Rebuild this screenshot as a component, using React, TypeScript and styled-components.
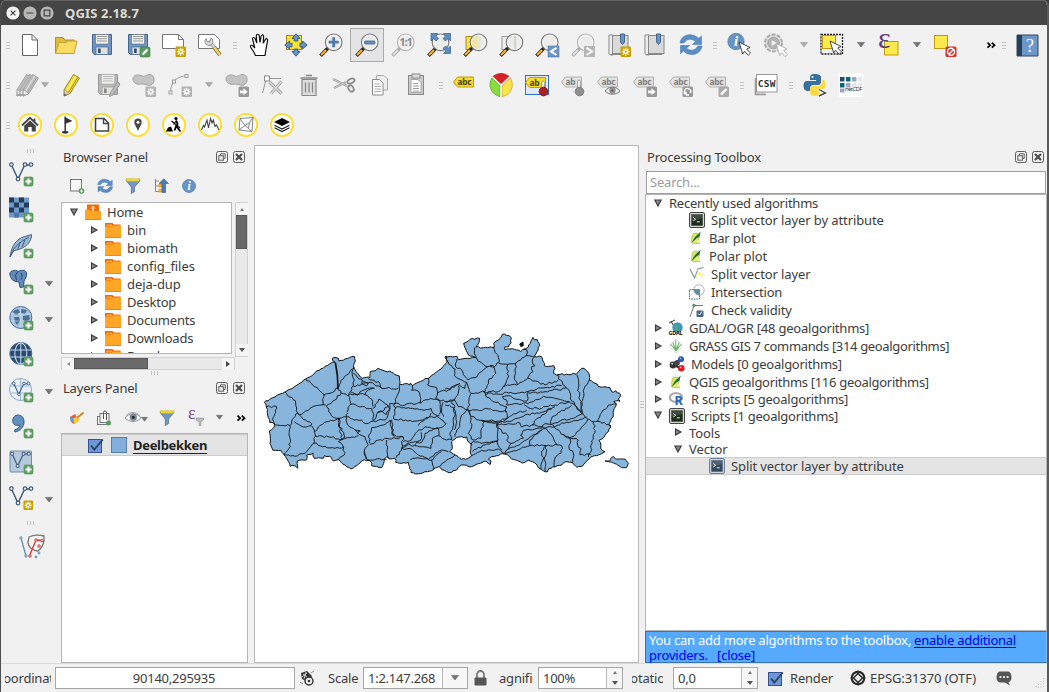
import React from "react";
import styled, { createGlobalStyle } from "styled-components";

const Global = createGlobalStyle`
  * { box-sizing: border-box; }
  body { margin: 0; background: #3a3a3a; }
  text { font-family: "Noto Sans", sans-serif; }
`;

/* ---------- window ---------- */
const Window = styled.div`
  width: 1049px; height: 692px; overflow: hidden;
  display: flex; flex-direction: column;
  background: #f1f1f1; color: #3c3c3c;
  border-left: 1px solid #4d4d4d; border-right: 2px solid #5a5a5a;
  border-radius: 6px 6px 0 0;
  font: 13px/18px "Noto Sans", sans-serif; letter-spacing: -0.2px;
  white-space: nowrap;
`;
const TitleBar = styled.header`
  height: 25px; flex: none; display: flex; align-items: center; gap: 3px; padding-left: 5px;
  background: #454545; border-top: 1px solid #626262;
  color: #dfdbd2; font-weight: 700; letter-spacing: 0;
`;
const TitleText = styled.span`margin-left: 8px; font-size: 13px; letter-spacing: 0.15px;`;
const Toolbar = styled.div`height: 40px; flex: none; display: flex; align-items: center; padding-left: 2px;`;
const Cell = styled.div<{ $w?: number; $pressed?: boolean }>`
  width: ${p => p.$w ?? 36}px; height: 34px; flex: none;
  display: flex; align-items: center; justify-content: center;
  ${p => p.$pressed && "margin: 0 1px; width: 34px; background: #e4e4e6; border: 1px solid #a9a9a9;"}
`;
const Grip = styled.div<{ $w?: number }>`
  width: ${p => p.$w ?? 9}px; flex: none; display: flex; justify-content: center;
  &::before { content: ""; width: 4px; height: 7px;
    background: repeating-linear-gradient(#c2c2c2 0 1px, transparent 1px 3px); }
`;
const VGrip = styled.div<{ $h: number; $ml?: number }>`
  height: ${p => p.$h}px; margin-left: ${p => p.$ml ?? 0}px; flex: none; display: flex; align-items: center;
  &::before { content: ""; width: 7px; height: 4px;
    background: repeating-linear-gradient(90deg, #c2c2c2 0 1px, transparent 1px 3px); }
`;
const Svg = styled.svg`display: block; flex: none; overflow: visible;`;

/* ---------- layout ---------- */
const Main = styled.main`flex: none; height: 518px; display: flex;`;
const Side = styled.aside`width: 60px; flex: none; display: flex; flex-direction: column;`;
const SideRow = styled.div`height: 36px; flex: none; padding-left: 8px; display: flex; align-items: center; gap: 12px;`;
const SideDown = styled.div`padding-top: 4px;`;
const Docks = styled.section`width: 187px; flex: none; display: flex; flex-direction: column; margin-right: 6px;`;
const DockTitle = styled.div<{ $h: number }>`
  height: ${p => p.$h}px; flex: none; display: flex; align-items: center; gap: 5px; padding: 0 3px 2px 2px;
  span { flex: 1; }
`;
const DockTools = styled.div<{ $h: number; $gap: number }>`
  height: ${p => p.$h}px; flex: none; display: flex; align-items: center; gap: ${p => p.$gap}px; padding-left: 8px;
`;
const BrowserArea = styled.div`display: grid; grid-template-columns: 171px 3px 13px; height: 155px; flex: none;`;
const Tree = styled.div`background: #fff; border: 1px solid #b5b5b5; overflow: hidden;`;
const BrowserTree = styled(Tree)`height: 152px;`;
const LayerTree = styled(Tree)`flex: 1;`;
const ToolTree = styled(Tree)`height: 437px; flex: none;`;
const TreeRow = styled.div<{ $indent: number; $h?: number; $selected?: boolean }>`
  height: ${p => p.$h ?? 18}px; padding-left: ${p => p.$indent}px;
  display: flex; align-items: center;
  ${p => p.$selected && "background: #e4e4e4; border-top: 1px solid #cbcbcb; border-bottom: 1px solid #cbcbcb;"}
`;
const ArrowBox = styled.div`width: 8px; height: 9px; flex: none;`;
const Label = styled.span<{ $ml?: number; $ls?: number }>`
  margin-left: ${p => p.$ml ?? 5}px; letter-spacing: ${p => p.$ls ?? -0.2}px;
`;
const VScroll = styled.div`
  grid-column: 3; border: 1px solid #d2d2d2; background: #e9e9e9; display: flex; flex-direction: column;
`;
const HScroll = styled.div`
  width: 174px; height: 13px; flex: none; border: 1px solid #d2d2d2; background: #e9e9e9; display: flex;
`;
const ScrollButton = styled.div`
  width: 12px; height: 12px; flex: none; display: flex; align-items: center; justify-content: center; background: #f5f5f5;
`;
const Thumb = styled.div<{ $w?: number; $h?: number }>`
  background: #6a6a6a; border: 1px solid #585858;
  width: ${p => (p.$w ? p.$w + "px" : "100%")}; height: ${p => (p.$h ? p.$h + "px" : "100%")};
`;
const Spacer = styled.div`flex: 1;`;
const Swatch = styled.div`width: 16px; height: 16px; margin-left: 7px; background: #82aedd; border: 1px solid #557da8;`;
const LayerName = styled.span`
  margin-left: 6px; font-weight: 700; color: #222; border-bottom: 1px solid #222; line-height: 16px; letter-spacing: -0.32px;
`;
const Canvas = styled.section`width: 385px; flex: none; background: #fff; border: 1px solid #b9b9b9;`;
const Splitter = styled.div`width: 6px; flex: none; display: flex; align-items: center; justify-content: center;`;
const Toolbox = styled.section`width: 402px; flex: none; display: flex; flex-direction: column;`;
const Search = styled.div`
  height: 23px; margin: 0 1px; border: 1px solid #9f9f9f; background: #fff; color: #9a9a9a; padding: 0 3px; line-height: 20px;
`;
const Notice = styled.div`
  height: 32px; flex: none; background: #55aaff; border: 1px solid #3a74ae; border-right-color: #7dbdff; color: #fff;
  padding: 1px 3px; line-height: 15px; letter-spacing: -0.24px;
`;
const NoticeLine = styled.div`height: 15px; white-space: pre;`;
const NoticeLink = styled.a<{ $line?: boolean }>`
  color: #0000f5; ${p => p.$line && "text-decoration: underline; text-underline-offset: 2px;"}
`;

/* ---------- status bar ---------- */
const Status = styled.footer`
  height: 29px; border-top: 1px solid #dadada; display: flex; align-items: center; padding-left: 4px;
`;
const Clip = styled.div<{ $w: number; $ml?: number }>`
  width: ${p => p.$w}px; margin-left: ${p => p.$ml ?? 0}px; flex: none; overflow: hidden; display: flex; justify-content: center;
`;
const Field = styled.div<{ $w: number; $ml: number; $center?: boolean }>`
  width: ${p => p.$w}px; height: 22px; margin-left: ${p => p.$ml}px; flex: none;
  background: #fff; border: 1px solid #a6a6a6; line-height: 20px; display: flex; letter-spacing: -0.25px;
  > span { flex: 1; padding-left: ${p => (p.$center ? 0 : 4)}px; padding-right: ${p => (p.$center ? 2 : 0)}px; text-align: ${p => (p.$center ? "center" : "left")}; }
`;
const FieldButton = styled.div<{ $w: number }>`
  width: ${p => p.$w}px; background: #f7f7f7; border-left: 1px solid #b8b8b8;
  display: flex; flex-direction: column; align-items: center; justify-content: center; gap: 7px;
`;
const Item = styled.div<{ $ml: number; $w?: number; $ls?: number }>`
  margin-left: ${p => p.$ml}px; flex: none; ${p => p.$w && `width: ${p.$w}px;`}
  letter-spacing: ${p => p.$ls ?? -0.2}px;
`;

/* ---------- small drawings ---------- */
type Kids = { children?: React.ReactNode; s?: number };
const Ic = ({ children, s = 24 }: Kids) => (
  <Svg width={s} height={s} viewBox={`0 0 ${s} ${s}`} fill="none">{children}</Svg>
);
const SerifText = styled.text`&& { font-family: "Liberation Serif", serif; }`;
const MonoText = styled.text`&& { font-family: "DejaVu Sans Mono", monospace; }`;
const Down = ({ w = 8, c = "#757575" }: { w?: number; c?: string }) => (
  <Svg width={w} height={w * 0.65} viewBox="0 0 8 5.2"><path d="M.4.4H7.6L4 5z" fill={c} stroke={c === "#aaa" ? "#999" : "#555"} strokeWidth=".5" /></Svg>
);
const UpTri = () => <Svg width="4" height="3"><path d="M0 3H4L2 0z" fill="#777" /></Svg>;
const DownTri = () => <Svg width="6" height="4"><path d="M0 0H6L3 4z" fill="#555" /></Svg>;
const Arrow = ({ open }: { open?: boolean }) => (
  <ArrowBox><Svg width="8" height="8"><path d={open ? "M.8 1H7.2L4 7z" : "M1.5 1V7L7 4z"} fill="#888" stroke="#3a3a3a" strokeWidth="1.1" /></Svg></ArrowBox>
);
const Chevrons = () => <Ic s={10}><path d="M1.5 2.7 4.2 5.2 1.5 7.7M5.8 2.7 8.5 5.2 5.8 7.7" stroke="#000" strokeWidth="1.7" /></Ic>;
const Plus = () => (
  <g><rect x="15" y="15" width="9" height="9" rx="1.5" fill="#5f9f60" stroke="#4a8a4c" strokeWidth=".6" />
    <path d="M19.5 16.5V22.5M16.5 19.5H22.5" stroke="#fff" strokeWidth="2" /></g>
);
const Star = ({ g, x = 13.5, y = 13.5 }: { g?: boolean; x?: number; y?: number }) => (
  <g transform={`translate(${x} ${y})`}>
    <rect width="10.5" height="10.5" rx="1.2" fill={g ? "#b1b1b1" : "#c9a000"} />
    <path d="M5.2 1.2V9.3M1.2 5.2H9.3M2.4 2.4 8 8M8 2.4 2.4 8" stroke="#fff" strokeWidth="1.1" />
    <circle cx="5.2" cy="5.2" r="2.3" fill="#fff" /><circle cx="5.2" cy="5.2" r="1.1" fill={g ? "#b1b1b1" : "#c9a000"} />
  </g>
);
const GrayArrow = () => (
  <g><rect x="13.5" y="13.5" width="10.5" height="10.5" rx="1.5" fill="#999" />
    <path d="M15 17.5H18.5V15.2L22.7 18.8 18.5 22.3V20.2H15z" fill="#fff" /></g>
);
const Mag = ({ g, children, x = 14.7 }: { g?: boolean; children?: React.ReactNode; x?: number }) => (
  <g>
    <path d="M8.5 15.5 1.5 22.7" stroke={g ? "#aaa" : "#222"} strokeWidth="3.6" />
    <path d="M7 17 2.1 22" stroke={g ? "#ddd" : "#f9b52b"} strokeWidth="2.1" />
    <path d="M10 14 7.5 16.5" stroke={g ? "#aaa" : "#222"} strokeWidth="2.5" />
    <circle cx={x} cy="9.3" r="8.3" fill="#ebebe9" fillOpacity=".88" stroke={g ? "#b3b3b3" : "#777"} strokeWidth="1.1" />
    <circle cx={x} cy="9.3" r="7" stroke="#fff" strokeWidth=".8" />
    {children}
  </g>
);
const Tag = ({ g, t = "abc", y = 4 }: { g?: boolean; t?: string; y?: number }) => (
  <g>
    <path d={`M.5 ${y + 5}L4.5 ${y}H20.5V${y + 10}H4.5z`} fill={g ? "#e2e2e2" : "#f7dd2c"} stroke={g ? "#b2b2b2" : "#bd9c12"} />
    <text x="4.5" y={y + 8} fontSize="8.5" fontWeight="700" letterSpacing="-.3" fill={g ? "#808080" : "#4a4216"}>{t}</text>
  </g>
);
const Floppy = ({ g }: { g?: boolean }) => (
  <g>
    <path d="M2.5 1.5H21.5V21.5H4.5L2.5 19.5z" fill={g ? "#b8b8b8" : "#6d97c8"} stroke={g ? "#999" : "#47678c"} />
    <rect x="5.5" y="1.5" width="13" height="9.5" fill="#f3f3f0" stroke={g ? "#a5a5a5" : "#667"} strokeWidth=".6" />
    <path d="M7 3.5H17M7 5.7H17M7 8H17" stroke={g ? "#aaa" : "#888"} strokeWidth=".9" />
    <rect x="6" y="14" width="12" height="7.5" fill="#e2e2df" stroke={g ? "#999" : "#47678c"} strokeWidth=".7" />
    <rect x="8" y="15.5" width="2.7" height="4.5" fill={g ? "#888" : "#33506f"} />
  </g>
);
const Pointer = ({ x = 12, y = 9, g }: { x?: number; y?: number; g?: boolean }) => (
  <path transform={`translate(${x} ${y})`} d="M0 0 11 5.5 7.7 7 11.5 11 9.2 13.3 5.5 9.2 3.7 12z" fill="#fff" stroke={g ? "#aaa" : "#333"} strokeWidth=".9" />
);
const Vee = () => (
  <g stroke="#3f5c7a" strokeWidth="1.2" fill="#eef3f8">
    <path d="M2.5 3 9 17 15.5 3.5 22 2.5" fill="none" strokeWidth="1.4" />
    <circle cx="2.4" cy="2.6" r="1.8" /><circle cx="16" cy="2.6" r="1.8" /><circle cx="22" cy="2.6" r="1.8" /><circle cx="9" cy="17" r="1.8" />
  </g>
);
const Cross4 = () => (
  <path d="M12 .8 16 5.5H13.8V8H10.2V5.5H8zM12 23.2 8 18.5H10.2V16H13.8V18.5H16zM.8 12 5.5 8V10.2H8V13.8H5.5V16zM23.2 12 18.5 16V13.8H16V10.2H18.5V8z" fill="#6794c6" stroke="#31577f" strokeWidth=".9" />
);
const Book = () => (
  <g><path d="M2 2H6V22H4C2 22 2 20 2 20z" fill="#eee" stroke="#888" /><rect x="5.5" y="2.5" width="15.5" height="18" fill="#d9d9d9" stroke="#888" />
    <path d="M4 21.5H19" stroke="#888" /><path d="M13.5 1H17.5V9L15.5 11.5 13.5 9z" fill="#6794c6" stroke="#395e87" strokeWidth=".9" /></g>
);
const Refresh = () => (
  <g fill="#5b8ec6" stroke="#3a6faa" strokeWidth=".5">
    <path d="M1 10C2 4 7 1.2 12 1.8 15 2.1 18 3.5 19.5 5.5L22.5 3V11.5H13.5L16.5 8.5C13 5.5 8 5 5 10z" />
    <path d="M23 13C22 19 17 22 12 21.5 9 21.2 6 20 4.5 18L1.5 20.8V12.5H10.5L7.5 15.2C11 18.2 16 18 19 13z" />
  </g>
);
const Info = ({ x, y, r }: { x: number; y: number; r: number }) => (
  <g><circle cx={x} cy={y} r={r} fill="#6794c6" stroke="#4d77a8" strokeWidth=".7" />
    <SerifText x={x} y={y + r * 0.6} textAnchor="middle" fontSize={r * 1.8} fontWeight="700" fontStyle="italic" fill="#fff">i</SerifText></g>
);
const Funnel = () => (
  <g><path d="M1 2.5 6.3 9V15.5L9.5 13.5V9L15 2.5z" fill="#7397bf" stroke="#50749b" strokeWidth=".8" /><path d="M1 .8H15L14.3 3.2H1.7z" fill="#f7e23b" stroke="#bda91e" strokeWidth=".6" /></g>
);
const Ring = ({ children }: Kids) => (
  <Ic><circle cx="12" cy="12" r="11.1" fill="#fff" stroke="#fcdc2c" strokeWidth="1.8" />{children}</Ic>
);
const Pencil = ({ g, x = 0 }: { g?: boolean; x?: number }) => (
  <g transform={`translate(${x} 0)`}>
    <path d="M13.5 1.5 19.5 5 10 20.5 4 23 4.2 16.5z" fill={g ? "#bdbdbd" : "#f1da36"} stroke={g ? "#a2a2a2" : "#8f7e1d"} strokeWidth=".9" />
    <path d="M15.7 3.2 6.7 18" stroke={g ? "#ddd" : "#fff27a"} strokeWidth="1.3" /><path d="M17.7 4.5 8.8 19.2" stroke={g ? "#a2a2a2" : "#a28d17"} strokeWidth=".9" />
    <path d="M4.3 16.5 10 20.5 4 23z" fill={g ? "#eee" : "#e9c893"} stroke="#888" strokeWidth=".6" /><path d="M4.2 20.5 6.7 22 4 23z" fill={g ? "#999" : "#555"} />
  </g>
);
const Blob = () => <path d="M1 6C1 2 6 1 9 2.7 13 4.5 14 1.2 18 1.5 23 2 23.5 10 19 12 15 13 13 10.5 9 11 5 12 1 10 1 6z" fill="#c3c3c3" stroke="#a2a2a2" />;
const Globe = ({ d }: { d?: boolean }) => (
  <g><circle cx="11.8" cy="11.5" r="11" fill={d ? "#294b72" : "#a9c3df"} stroke="#456e9b" />
    {d ? <g stroke="#c6d9ed" strokeWidth="1.1"><path d="M1.5 8H22M1.5 15H22M11.8 1V22" /><ellipse cx="11.8" cy="11.5" rx="6" ry="10.5" /></g>
      : <g><path d="M4 5 9 3 11 6 8 9 5 8zM12 3 18 4 16 8 12 7zM5 11 10 11 11 15 8 19 6 16zM14 10 20 9 21 13 17 16 14 14zM14 18 17 17 16 20z" fill="#4d7096" /><path d="M1.5 8H22M1.5 15H22M11.8 1V22" stroke="#dce8f4" strokeWidth=".5" /></g>}</g>
);
const Terminal = ({ b }: { b?: boolean }) => (
  <Ic s={16}><rect x=".5" y=".5" width="15" height="15" rx="1.5" fill={b ? "#cbd3dd" : "#d5d5d0"} stroke={b ? "#687f99" : "#444"} />
    <rect x="2.3" y="2.3" width="11.4" height="11.4" fill={b ? "#34495c" : "#1d2d1d"} /><path d="M2.5 2.5H13.5V6L2.5 9z" fill="#fff" opacity=".15" />
    <path d="M4.3 5.5 6.7 7.3 4.3 9M7.8 9.8H10.8" stroke="#e6efe0" /></Ic>
);
const QLeaf = () => (
  <Ic s={14}><path d="M3 6C3 2.8 5.5 1.3 9 2.5L11 5 9.5 8 10.5 12.5H7L4 12.8C2 11 2.5 8 3 6z" fill="#dce868" stroke="#9cac3c" strokeWidth=".6" />
    <path d="M2 12.5 6 6 11.8.5 10.3 5.5 7 8z" fill="#1f6b33" /><path d="M4.5 12.5 8.5 7" stroke="#dff07a" strokeWidth="1" /><circle cx="9.5" cy="10.5" r="1.2" fill="#f6fac9" /></Ic>
);
const Folder = ({ home }: { home?: boolean }) => (
  <Svg width="16" height="16"><path d={home ? "M2 .5H14V7H2z" : "M0 1H7.5L9 2.5H15.5V7H0z"} fill="#f06c00" />
    {home ? <path d="M8 1.5 11 4.5H9V7H7V4.5H5z" fill="#ffc58c" /> : <path d="M1.5 3.2H7" stroke="#ffdcb5" strokeWidth=".8" />}
    <path d={home ? "M0 5.5H4L6 7H16V16H0z" : "M0 4.5H6L8 3.5H16V16H0z"} fill="#ffa626" /><path d="M0 15.5H16" stroke="#e98b13" /></Svg>
);
const Check = () => (
  <Svg width="16" height="15"><rect x=".5" y="1.5" width="13" height="13" fill="#6c97dc" stroke="#33528f" /><path d="M3 7.5 6.3 11.5 14.8 1.5" fill="none" stroke="#2f3f58" strokeWidth="1.8" /></Svg>
);
const DockButtons = () => (
  <>
    <Ic s={12}><rect x=".5" y=".5" width="11" height="11" rx="2" stroke="#5d5d5d" /><path d="M4.5 4.5V2.8H9.2V7.3H7.5" stroke="#5d5d5d" /><rect x="2.8" y="4.7" width="4.6" height="4.5" stroke="#5d5d5d" /></Ic>
    <Ic s={12}><rect x=".5" y=".5" width="11" height="11" rx="2" stroke="#5d5d5d" /><path d="M3 3 9 9M9 3 3 9" stroke="#4d4d4d" strokeWidth="2.2" /></Ic>
  </>
);
const WinButton = ({ k }: { k: "x" | "-" | "o" }) => (
  <Ic s={14}><circle cx="7" cy="7" r="6.6" fill={k === "x" ? "#f4f4f2" : "#b7b7b5"} />
    <path d={k === "x" ? "M4.6 4.6 9.4 9.4M9.4 4.6 4.6 9.4" : k === "-" ? "M3.5 7H10.5" : "M4.2 4.2H9.8V9.8H4.2z"} stroke="#444" strokeWidth="1.2" /></Ic>
);
const Eye = () => (
  <g><path d="M0 8C4 2.5 12 2 16 8 12 12.5 4 12.5 0 8z" fill="#f6f6f6" stroke="#888" strokeWidth=".9" /><path d="M1 5.5C5 1.5 11 1.5 15 5.5" stroke="#999" strokeWidth=".8" /><circle cx="8.3" cy="7.3" r="3.3" fill="#7894af" stroke="#556" strokeWidth=".5" /><circle cx="8.3" cy="7.3" r="1.5" fill="#222" /></g>
);

/* ---------- toolbars ---------- */
const FileBar = () => (
  <Toolbar>
    <Grip />
    <Cell><Ic><path d="M4.5 1.5H14L19.5 7V22.5H4.5z" fill="#fff" stroke="#666" /><path d="M14 1.5V7H19.5" stroke="#666" /></Ic></Cell>
    <Cell><Ic><path d="M1.5 20V4.5H9L11 7H20V20z" fill="#dfbb3c" stroke="#b08f28" /><path d="M1.5 20.5 5 9.5H12L14 8H23L20 20.5z" fill="#fbdc62" stroke="#c3a034" /></Ic></Cell>
    <Cell><Ic><Floppy /></Ic></Cell>
    <Cell><Ic><Floppy /><rect x="14" y="14" width="10" height="10" rx="1.5" fill="#5b9a5d" stroke="#3f7b43" strokeWidth=".6" /><path d="M16.5 21.5 21.5 16.5" stroke="#fff" strokeWidth="2.4" /></Ic></Cell>
    <Cell><Ic><path d="M.5 1.5H16.5L21.5 6.5V15.5H.5z" fill="#fff" stroke="#777" /><path d="M16.5 1.5V6.5H21.5" stroke="#777" /><Star /></Ic></Cell>
    <Cell><Ic><path d="M.5 1.5H16.5L21.5 6.5V15.5H.5z" fill="#fff" stroke="#777" /><path d="M16 14 22 22" stroke="#8a7326" strokeWidth="4" /><path d="M16 14 22 22" stroke="#ecd27a" strokeWidth="2.4" />
      <path d="M11 8 16 14" stroke="#777" strokeWidth="3.5" /><path d="M11 8 16 14" stroke="#ddd" strokeWidth="2" /><path d="M8.2 5.5A4 4 0 1 0 13 5L11.5 9 9 8.5z" fill="#ddd" stroke="#777" strokeWidth=".8" /></Ic></Cell>
    <Grip $w={14} />
    <Cell><Ic><path d="M7.5 22.5 5.5 18.5 2.8 14.5C1.8 12.5 3.5 11.5 5 13L6.8 15 4.7 6.5C4.2 4.2 6.5 3.8 7.2 5.8L8.8 10 8.3 2.8C8.3.8 10.8.7 11.2 2.7L12 9.5 13.2 3C13.7 1.2 15.8 1.7 15.6 3.6L15.2 10.2 17.3 6.5C18.4 5 20 6 19.5 7.8L17.8 17.5 17 22.5z" fill="#fff" stroke="#111" strokeWidth="1.2" /></Ic></Cell>
    <Cell $w={35}><Ic><rect x="2.5" y="2.5" width="15" height="14" fill="#fbe230" stroke="#9b8821" /><Cross4 /></Ic></Cell>
    <Cell><Ic><Mag><path d="M14.7 4.2V14.2M9.7 9.2H19.7" stroke="#4d7aab" strokeWidth="2.8" /></Mag></Ic></Cell>
    <Cell $pressed><Ic><Mag><rect x="9.5" y="8" width="10.5" height="3" rx="1" fill="#6390c0" stroke="#42658e" strokeWidth=".8" /></Mag></Ic></Cell>
    <Cell><Ic><Mag g><text x="14.7" y="12.8" textAnchor="middle" fontSize="10.5" fontWeight="700" letterSpacing="-.9" fill="#888">1:1</text></Mag></Ic></Cell>
    <Cell><Ic><Mag x={13.5} /><path d="M4 .5H11L8.8 3 11.5 5.5 9 8 6.5 5.5 4 8zM23.5.5H16.5L18.7 3 16 5.5 18.5 8 21 5.5 23.5 8zM23.5 20.5H16.5L18.7 18 16 15.5 18.5 13 21 15.5 23.5 13z" fill="#5e8dc2" stroke="#345c89" strokeWidth=".7" /></Ic></Cell>
    <Cell><Ic><rect x="3" y="3.5" width="14" height="13" fill="#fbe04a" stroke="#b08d0e" /><Mag x={15.5}><path d="M15 3V16C10 15.5 8.5 12 8.5 9 9 5 12 3.4 15 3z" fill="#f1e48e" opacity=".7" /></Mag></Ic></Cell>
    <Cell><Ic><rect x="3" y="3.5" width="14" height="13" fill="#eee" stroke="#999" /><Mag x={15.5}><path d="M16 3V16" stroke="#bbb" /></Mag></Ic></Cell>
    <Cell><Ic><Mag /><rect x="13" y="13" width="11" height="11" fill="#6b98ca" stroke="#4d77a6" strokeWidth=".6" /><path d="M21.5 14.8 16 18.5 21.5 22" stroke="#fff" strokeWidth="2" /></Ic></Cell>
    <Cell><Ic><Mag g /><rect x="13" y="13" width="11" height="11" fill="#b5b5b5" /><path d="M15.5 14.8 21 18.5 15.5 22" stroke="#fff" strokeWidth="2" /></Ic></Cell>
    <Cell><Ic><Book /><Star /></Ic></Cell>
    <Cell><Ic><Book /></Ic></Cell>
    <Cell><Ic><Refresh /></Ic></Cell>
    <Grip $w={12} />
    <Cell><Ic><Info x={9} y={8.5} r={8.2} /><Pointer /></Ic></Cell>
    <Cell><Ic><circle cx="10.5" cy="10" r="8.5" fill="#e3e3e3" stroke="#aaa" strokeWidth="2" strokeDasharray="4 1.4" /><circle cx="10.5" cy="10" r="5.8" fill="#b4b4b4" stroke="#a2a2a2" /><path d="M8.5 7 14 10 8.5 13z" fill="#eee" /><Pointer g x={13} y={10.5} /></Ic></Cell>
    <Cell $w={21}><Down c="#aaa" /></Cell>
    <Cell><Ic><rect x="1" y="1.5" width="21.5" height="19.5" stroke="#222" strokeDasharray="2 1" strokeWidth="1.3" /><rect x="2.5" y="2.5" width="13" height="13" fill="#fde84d" stroke="#b99a0e" /><Pointer x={10} y={8} /></Ic></Cell>
    <Cell $w={21}><Down /></Cell>
    <Cell><Ic><rect x="7.5" y="8.5" width="13.5" height="13.5" fill="#fde84d" stroke="#c09a0c" /><SerifText x="1" y="15.3" fontSize="30" fill="#613d78">ε</SerifText></Ic></Cell>
    <Cell $w={20}><Down /></Cell>
    <Cell><Ic><rect x="1.5" y="2.5" width="13" height="13" fill="#fde84d" stroke="#c09a0c" /><rect x="12.5" y="13.5" width="11" height="10.5" rx="1.5" fill="#d33333" /><circle cx="18" cy="18.7" r="3.5" stroke="#fff" strokeWidth="1.4" /><path d="M15.8 21.2 20.5 16.5" stroke="#fff" strokeWidth="1.4" /></Ic></Cell>
    <Cell $w={19} />
    <Cell $w={18}><Chevrons /></Cell>
    <Grip $w={8} />
    <Cell $w={39}><Ic s={21}><path d="M0 0H21V21H0z" fill="#6d97c9" stroke="#33475c" /><path d="M0 0H5V21H0z" fill="#263f58" /><SerifText x="13" y="16.5" textAnchor="middle" fontSize="18" fill="#fff">?</SerifText></Ic></Cell>
  </Toolbar>
);

const EditBar = () => (
  <Toolbar>
    <Grip />
    <Cell $w={42}><Ic><Pencil g x={-4} /><Pencil g x={-1} /><Pencil g x={2} /></Ic><Down c="#aaa" /></Cell>
    <Cell><Ic><Pencil /></Ic></Cell>
    <Cell><Ic><Floppy g /><path d="M21.5 9 24 11 17 22 13.5 23.5 14.5 19.5z" fill="#bbb" stroke="#999" /></Ic></Cell>
    <Cell><Ic><Blob /><Star g /></Ic></Cell>
    <Cell><Ic><path d="M2.5 19C3 9 8 4 17 3" stroke="#aaa" strokeWidth="1.2" /><rect x="1" y="18" width="3" height="3" fill="#fff" stroke="#999" /><rect x="4.5" y="7" width="3" height="3" fill="#fff" stroke="#999" /><rect x="17" y="1.5" width="3" height="3" fill="#fff" stroke="#999" /><Star g /></Ic></Cell>
    <Cell $w={21}><Down c="#aaa" /></Cell>
    <Cell><Ic><Blob /><GrayArrow /></Ic></Cell>
    <Cell><Ic><path d="M5.5 5 1.5 20M6 5.5H20" stroke="#999" /><rect x="3.5" y="3" width="5" height="5" fill="#fff" stroke="#888" /><path d="M20.5 8.5 10 20.5M8.5 9 20.5 20.5" stroke="#a5a5a5" strokeWidth="3.2" /><path d="M20.5 8.5 10 20.5M8.5 9 20.5 20.5" stroke="#ddd" strokeWidth="1.2" /></Ic></Cell>
    <Cell $w={35}><Ic><path d="M5 6.5H19V22.5H5z" fill="#ddd" stroke="#888" strokeWidth="1.2" /><path d="M3.5 5H20.5M9 2.5H15M8.5 9.5V19.5M12 9.5V19.5M15.5 9.5V19.5" stroke="#888" strokeWidth="1.3" /></Ic></Cell>
    <Cell><Ic><path d="M1 6 15 13M2 15 14 9" stroke="#999" strokeWidth="2" /><path d="M1 6 15 13M2 15 14 9" stroke="#e0e0e0" strokeWidth=".7" /><ellipse cx="19" cy="8" rx="3.8" ry="2.2" transform="rotate(-25 19 8)" stroke="#888" strokeWidth="1.7" /><ellipse cx="19" cy="15.5" rx="2.4" ry="3.4" transform="rotate(-35 19 15.5)" stroke="#888" strokeWidth="1.7" /></Ic></Cell>
    <Cell><Ic><path d="M8.5 2.5H16L19.5 6V17H8.5z" fill="#eee" stroke="#aaa" /><path d="M4.5 6.5H11.5L15 10V22H4.5z" fill="#fff" stroke="#888" /><path d="M6.5 11H12.5M6.5 13.5H13M6.5 16H13M6.5 18.5H13" stroke="#aaa" /></Ic></Cell>
    <Cell><Ic><rect x="4.5" y="2.5" width="15" height="19" fill="#ccc" stroke="#888" /><rect x="8" y="1" width="8" height="4" fill="#ddd" stroke="#888" /><path d="M7 6.5H14L17 9.5V19.5H7z" fill="#fff" stroke="#888" strokeWidth=".7" /><path d="M9 10.5H14M9 13H15M9 15.5H15M9 18H15" stroke="#999" /></Ic></Cell>
    <Grip $w={13} />
    <Cell><Ic><Tag /></Ic></Cell>
    <Cell><Ic><path d="M12 12 3.5 4A12 12 0 0 1 20.5 4z" fill="#d91f26" stroke="#b8141b" strokeWidth=".8" /><path d="M11 12.5V23.5A12 12 0 0 1 3 5z" fill="#89dc3b" stroke="#5ba821" strokeWidth=".8" /><path d="M13 12.5V23.5A12 12 0 0 0 21.3 5z" fill="#ffe44d" stroke="#c6a51d" strokeWidth=".8" /><path d="M12 12V24M12 12 3.3 3.7M12 12 20.7 3.7" stroke="#fff" strokeWidth="1.2" /></Ic></Cell>
    <Cell><Ic><rect x=".5" y="2.5" width="23" height="19" fill="#dfe9f7" stroke="#2f6fd0" /><Tag t="ab" y={4.5} /><rect x="16.5" y="8" width="3" height="9" rx="1.5" fill="#f5f5f5" stroke="#888" strokeWidth=".7" /><circle cx="18.5" cy="18.5" r="4.3" fill="#ad2026" stroke="#7d1419" /></Ic></Cell>
    <Cell><Ic><Tag g t="ab" /><rect x="16.5" y="7" width="3" height="9" rx="1.5" fill="#eee" stroke="#888" strokeWidth=".7" /><circle cx="18.5" cy="18.5" r="4.3" fill="#8f8f8f" stroke="#808080" /></Ic></Cell>
    <Cell><Ic><Tag g /><g transform="translate(8 12) scale(.93)"><path d="M0 6.5C4 1 12 1 16 6.5 12 11 4 11 0 6.5z" fill="#f1f1f1" stroke="#666" /><circle cx="8" cy="6" r="3" fill="#aaa" stroke="#777" /><circle cx="8" cy="6" r="1.3" fill="#555" /></g></Ic></Cell>
    <Cell><Ic><Tag g /><GrayArrow /></Ic></Cell>
    <Cell><Ic><Tag g /><rect x="13.5" y="13.5" width="10.5" height="10.5" rx="1.5" fill="#999" /><path d="M17 21.5A3.2 3.2 0 1 1 21.5 20M17 22V18.7M17 22H20" stroke="#fff" strokeWidth="1.4" /></Ic></Cell>
    <Cell><Ic><Tag g /><rect x="13.5" y="13.5" width="10.5" height="10.5" rx="1.5" fill="#aaa" /><path d="M16 21.5 21.5 16" stroke="#fff" strokeWidth="2.4" /></Ic></Cell>
    <Grip $w={13} />
    <Cell><Ic><path d="M1.5 5V21.5H12" stroke="#999" strokeWidth="1.5" fill="#ddd" /><rect x="2.5" y="1.5" width="20.5" height="17.5" fill="#fff" stroke="#999" /><MonoText x="12.7" y="13.5" textAnchor="middle" fontSize="9.5" letterSpacing=".3" fill="#333" fontWeight="700">CSW</MonoText></Ic></Cell>
    <Grip $w={13} />
    <Cell><Ic><path d="M12 1C7 1 7 3 7 6V7H13V8H4C1 8 .5 11 .5 13 .5 16 2 18 5 18H7V15C7 13 9 12 10 12H15C17 12 18 10 18 9V4C18 2 15 1 12 1z" fill="#36719f" /><path d="M12 23C17 23 17 21 17 18V17H11V16H20C22 16 23 13 22.5 11 22.5 8 21.5 6.5 19 6.5V9.5C19 12 17 13 15 13H10C8 13 7 14 7 16V20C7 22 9 23 12 23z" fill="#ffd845" /><circle cx="9.5" cy="4" r="1.1" fill="#fff" /><path d="M16 16.5 22.5 20 16 23" stroke="#fff" strokeWidth="3" /><path d="M16 16.5 22.5 20 16 23" stroke="#444" strokeWidth="1.4" /></Ic></Cell>
    <Cell><Ic><rect width="24" height="24" fill="#fff" /><path d="M1 4H5.5V8.5H1z" fill="#264a67" /><path d="M7 4H11.5V8.5H7zM1 10H5.5V14.5H1z" fill="#08697c" /><path d="M13 4H17.5V8.5H13zM7 10H11.5V14.5H7zM1 15.5H5.5V19.5H1z" fill="#9aa7bd" /><path d="M19 4H23V8.5H19zM13 10H17.5V14.5H13zM19 10H23V14.5H19z" fill="#e5e5ea" /><text x="6" y="18.2" fontSize="5.8" letterSpacing="-.5" fill="#333">netCDF</text></Ic></Cell>
  </Toolbar>
);

const RingBar = () => (
  <Toolbar>
    <Grip />
    <Cell><Ring><path d="M4 12.5 12 4.8 20 12.5M16.5 5.5V9" stroke="#444" strokeWidth="1.8" /><path d="M6.2 12.8 12 7.4 17.8 12.8V18.5H13.7V14H10.3V18.5H6.2z" fill="#444" /></Ring></Cell>
    <Cell><Ring><path d="M10.8 4 18.5 8 10.8 11z" fill="#333" /><path d="M11.2 3.5V19" stroke="#333" strokeWidth="1.5" /><ellipse cx="11.2" cy="19.3" rx="3.3" ry="1.4" fill="#333" /></Ring></Cell>
    <Cell><Ring><path d="M5.5 5.5H14L18.5 10V18H5.5z" stroke="#444" strokeWidth="1.6" fill="#fff" /><path d="M13.5 5.5V10.5H18.5" stroke="#444" strokeWidth="1.4" /></Ring></Cell>
    <Cell><Ring><path d="M12 18C10.5 14 8.3 12 8.3 9.3A3.7 3.7 0 0 1 15.7 9.3C15.7 12 13.5 14 12 18z" fill="#484848" /><circle cx="12" cy="9.3" r="1.5" fill="#fff" /></Ring></Cell>
    <Cell><Ring><path d="M4 18.5 6 14.5 9 13.5 11 18.5z" fill="#000" /><circle cx="14" cy="5.5" r="1.6" fill="#000" /><path d="M14 7.5 15.5 10.5 15 14 18.5 18.5M14.5 12 12.5 17.5" stroke="#000" strokeWidth="1.8" /><path d="M14 8 11.5 11.5M9.5 8 18 15" stroke="#000" strokeWidth="1.1" /></Ring></Cell>
    <Cell><Ring><path d="M3.5 17 5.5 12.5 6.5 14 9 7 10.5 15 12.5 5.5 14 10 15.3 7 17 13.5 18.5 12 21 17" stroke="#444" strokeWidth="1.1" /></Ring></Cell>
    <Cell><Ring><path d="M6 5.5 19 4.5 18 18.5 5 17zM6 5.5 11 12.5 5 17M11 12.5 15.5 9.5 19 4.5M11 12.5 14.5 15.5 18 18.5M15.5 9.5 14.5 15.5" stroke="#777" strokeWidth=".9" /></Ring></Cell>
    <Cell><Ring><path d="M4.5 14.8 12 18.5 19.5 14.8M4.5 12.3 12 16 19.5 12.3" stroke="#222" strokeWidth="1.2" /><path d="M4 9 12 5 20 9 12 13z" fill="#000" /></Ring></Cell>
  </Toolbar>
);

const SideBar = () => (
  <Side>
    <VGrip $h={11} $ml={26} />
    <SideRow><Ic><Vee /><Plus /></Ic></SideRow>
    <SideRow><Ic><rect x="0" y="-.5" width="20" height="20" fill="#6f9bcb" /><path d="M0-.5H5V4.5H0zM10-.5H15V4.5H10zM5 4.5H10V9.5H5zM15 4.5H20V9.5H15zM0 9.5H5V14.5H0zM10 9.5H15V14.5H10z" fill="#243c5a" /><path d="M5 14.5H10V19.5H5z" fill="#4d76a6" /><Plus /></Ic></SideRow>
    <SideRow><Ic><path d="M1 23C2 17 3 11 9 6 13 2.5 18 2 22.5.5 23 7 17 15 5 16.5z" fill="#9bb7d6" stroke="#47688b" /><path d="M1 23C3 15 9 9 20 3M9 15 11 8M13 13 16 6" stroke="#405e7e" /><Plus /></Ic></SideRow>
    <SideRow><Ic><path d="M2 1.5C6-.5 8 .5 9 1.5 13-.5 17 0 17.5 3 18 7 16 9 15 11L14.5 17 11 17.5 10 12 7 11.5 3.5 10C1 7 0 3 2 1.5z" fill="#628ab9" stroke="#2e527a" /><path d="M9 1.5 6.5 5 7.5 10.5M12 3C14 6 12 9 12 10" stroke="#26476c" /><Plus /></Ic><SideDown><Down /></SideDown></SideRow>
    <SideRow><Ic><Globe /><Plus /></Ic><SideDown><Down /></SideDown></SideRow>
    <SideRow><Ic><Globe d /><Plus /></Ic></SideRow>
    <SideRow><Ic><circle cx="11.5" cy="11.5" r="11" fill="#e9f0f8" stroke="#82a8cf" /><path d="M1 8H22M1 15H22M11.5 1V22" stroke="#9bb9d9" /><g transform="translate(3 3.5) scale(.75)"><Vee /></g><Plus /></Ic><SideDown><Down /></SideDown></SideRow>
    <SideRow><Ic><path d="M9 1C13 1 15 4 15 8 15 13 11 17 6 18L5.5 16C9 15 10.5 13 10.5 11 6 12.5 3.5 9.5 3.7 6.5 4 3 6 1 9 1z" fill="#6390c0" stroke="#335a84" /><Plus /></Ic></SideRow>
    <SideRow><Ic><rect x="1" y="1" width="21.5" height="21" rx="1" fill="#b7c9dc" stroke="#6f8cab" /><g transform="translate(1 1.5) scale(.85)"><Vee /></g><Plus /></Ic></SideRow>
    <SideRow><Ic><Vee /><g transform="translate(2 2) scale(.92)"><Star /></g></Ic><SideDown><Down /></SideDown></SideRow>
    <VGrip $h={14} $ml={26} />
    <SideRow><Svg width="26" height="26" viewBox="-11 0 26 26" fill="none"><path d="M1 3 6 21" stroke="#5686b7" strokeWidth="1.2" /><path d="M9 2C14-.5 20 0 24 1 25 7 22 13 18 16 13 16 8 12 8 7z" stroke="#777" strokeWidth="1.3" fill="#f4f4f4" /><path d="M9 22 16 5 21 5.5" stroke="#d43434" strokeWidth="1.3" /><g fill="#fff" stroke="#d43434"><circle cx="16" cy="5" r="1.2" /><circle cx="22" cy="5.5" r="1.2" /><circle cx="10" cy="21" r="1.2" /><circle cx="19" cy="11" r="1.2" /></g><g fill="#fff" stroke="#5686b7"><circle cx="1" cy="3" r="1.2" /><circle cx="6" cy="21" r="1.2" /><circle cx="19" cy="18" r="1" /><circle cx="16" cy="22" r="1" /></g></Svg></SideRow>
  </Side>
);

/* ---------- panels ---------- */
const folders = ["bin", "biomath", "config_files", "deja-dup", "Desktop", "Documents", "Downloads", "Dropbox"];
const DockArea = () => (
  <Docks>
    <DockTitle $h={25}><span>Browser Panel</span><DockButtons /></DockTitle>
    <DockTools $h={32} $gap={12}>
      <Ic s={16}><rect x="1.5" y="1.5" width="11" height="11.5" fill="#f7f7f7" stroke="#777" /><circle cx="12.5" cy="13" r="2.8" fill="#5a9a5b" /><path d="M12.5 11.5V14.5M11 13H14" stroke="#fff" /></Ic>
      <Ic s={16}><g transform="scale(.68)"><Refresh /></g></Ic>
      <Ic s={16}><Funnel /></Ic>
      <Ic s={16}><path d="M2.5 1V13.5H6M2.5 3H6M2.5 8H6" stroke="#888" /><rect x="5.5" y="6" width="3.5" height="3.5" fill="#ff9d2e" /><rect x="5.5" y="11" width="3.5" height="3.5" fill="#ff9d2e" /><path d="M10.8.8 15.5 5.5H12.5V14.5H9V5.5H6z" fill="#4d7dae" stroke="#2e577f" strokeWidth=".6" /></Ic>
      <Ic s={16}><Info x={8} y={8} r={6.5} /></Ic>
    </DockTools>
    <BrowserArea>
      <BrowserTree>
        <TreeRow $indent={8}><Arrow open /><Label $ml={7} /><Folder home /><Label $ml={6} $ls={-0.25}>Home</Label></TreeRow>
        {folders.map(f => <TreeRow key={f} $indent={28}><Arrow /><Label $ml={7} /><Folder /><Label $ml={6} $ls={f.startsWith("D") ? -0.2 : -0.05}>{f}</Label></TreeRow>)}
      </BrowserTree>
      <VScroll><ScrollButton><UpTri /></ScrollButton><Thumb $h={34} /><Spacer /><ScrollButton><DownTri /></ScrollButton></VScroll>
    </BrowserArea>
    <HScroll><ScrollButton><Svg width="3" height="4"><path d="M3 0V4L0 2z" fill="#888" /></Svg></ScrollButton><Thumb $w={74} /><Spacer /><ScrollButton><Svg width="4" height="6"><path d="M0 0V6L4 3z" fill="#444" /></Svg></ScrollButton></HScroll>
    <VGrip $h={6} $ml={90} />
    <DockTitle $h={26}><span>Layers Panel</span><DockButtons /></DockTitle>
    <DockTools $h={31} $gap={0}>
      <Cell $w={16}><Ic s={16}><path d="M1 7 6 4 10 10 5 14 2 12z" fill="#ed5948" /><path d="M3 9 8 6.5 11 10 6 14z" fill="#f5cc35" /><path d="M1 8 4 7 5 11 2 12z" fill="#5e9dd6" /><path d="M8 8 14.5 2.5" stroke="#c88b29" strokeWidth="2" /></Ic></Cell>
      <Cell $w={38}><Ic s={16}><rect x="1.5" y="6.5" width="9" height="8" fill="#eee" stroke="#777" /><rect x="4" y="3.5" width="9" height="9" fill="#f8f8f8" stroke="#777" /><path d="M7.5 9V2.5A1.5 1.5 0 0 1 10.5 2.5V10" stroke="#555" /><circle cx="12.5" cy="13" r="2.5" fill="#5a9a5b" /></Ic></Cell>
      <Cell $w={27}><Ic s={16}><Eye /></Ic><SideDown><Down w={7} /></SideDown></Cell>
      <Cell $w={33}><Ic s={16}><Funnel /></Ic></Cell>
      <Cell $w={25}><Ic s={16}><SerifText x="0" y="8.8" fontSize="18" fill="#774d8d">ε</SerifText><path d="M8 8H15.5V10L13 11.5V15.5H11V11.5L8 10z" fill="#bbb" stroke="#888" strokeWidth=".5" /></Ic></Cell>
      <Cell $w={22}><Down w={7} /></Cell>
      <Cell $w={21}><Chevrons /></Cell>
    </DockTools>
    <LayerTree>
      <TreeRow $indent={26} $h={22} $selected><Check /><Swatch /><LayerName>Deelbekken</LayerName></TreeRow>
    </LayerTree>
  </Docks>
);

/* ---------- map: drainage basins, drawn at three units per pixel ---------- */

/* Breaks each long segment into short ones with small sideways steps, so borders look like natural watercourses. */
function meander(d: string, amp: number): string {
  let seed = 7;
  const rand = () => ((seed = (seed * 16807) % 2147483647) / 2147483647) * 2 - 1;
  return d.split("M").map(s => s.trim()).filter(Boolean).map(s => {
    const n = s.split(/\s+/).map(Number);
    let out = `M${n[0]} ${n[1]}`;
    for (let i = 2; i + 1 < n.length; i += 2) {
      const [x0, y0, x1, y1] = [n[i - 2], n[i - 1], n[i], n[i + 1]];
      const len = Math.hypot(x1 - x0, y1 - y0);
      const steps = Math.max(1, Math.round(len / 7));
      for (let k = 1; k < steps; k++) {
        const o = rand() * amp;
        out += ` ${(x0 + ((x1 - x0) * k) / steps - ((y1 - y0) / len) * o).toFixed(1)} ${(y0 + ((y1 - y0) * k) / steps + ((x1 - x0) / len) * o).toFixed(1)}`;
      }
      out += ` ${x1} ${y1}`;
    }
    return out;
  }).join("");
}
const outline =
  "M28 232 44 223 60 216 75 207 90 201 120 184 152 162 166 155 180 143 210 124 225 116 240 111 233 107 232 100 240 97 250 100 252 108 270 102 290 95 298 94 301 108 296 128 303 140 312 150 322 160 334 157 345 158 346 140 357 138 368 130 384 136 410 142 420 149 433 153 434 178 450 176 464 180 466 174 472 182 490 172 510 161 520 160 540 145 560 130 572 116 578 107 570 97 572 94 606 94 611 104 630 100 660 97 640 90 632 72 626 55 645 43 674 40 672 52 662 66 685 68 718 67 716 55 730 45 742 28 748 27 762 32 769 38 768 55 760 66 748 67 750 74 765 72 785 75 797 80 810 72 820 66 828 48 834 37 838 44 847 44 854 62 846 80 838 94 860 95 865 110 868 122 880 124 896 122 900 130 896 145 905 150 915 148 940 149 955 145 964 148 970 140 980 130 988 130 998 140 1003 150 1003 165 1020 175 1035 186 1050 185 1065 188 1070 200 1075 202 1082 197 1087 204 1097 208 1090 222 1095 229 1082 228 1076 230 1084 236 1078 250 1075 268 1067 290 1062 300 1068 306 1060 320 1046 338 1032 346 1038 360 1038 372 1050 380 1025 392 1007 396 992 412 984 422 966 427 952 412 935 410 920 420 900 426 882 430 878 440 866 438 850 428 838 413 822 405 802 414 785 406 770 402 755 388 742 386 725 392 710 395 700 402 708 408 706 418 690 408 670 416 650 425 620 420 606 434 590 442 575 440 560 434 553 425 535 434 510 440 490 446 468 443 464 425 460 412 440 415 422 412 420 400 404 402 395 396 388 404 386 415 380 428 365 424 350 422 348 410 328 404 315 414 300 424 288 432 270 420 250 404 235 408 224 394 208 392 205 400 190 398 178 400 174 384 155 390 155 404 127 408 128 430 118 422 106 424 96 402 86 388 78 376 54 376 45 356 46 340 43 318 56 308 58 296 44 292 38 270 34 246 28 232" +
  "M590 350 600 342 612 336 636 336 638 348 650 358 648 372 646 384 650 392 632 403 614 400 596 388 584 380 592 370 590 350";
const westLines =
  "M34 246 64 244 62 262 54 278 56 290 62 300 105 301M90 201 98 212 112 218 122 234 128 264M152 162 172 178 186 187 202 204 208 210 204 230 205 240M128 264 140 268 165 250 190 241 212 240M128 264 110 290 105 301 102 330 106 345 102 370 86 388M128 264 140 276 158 290 170 296 168 302 145 306 118 290M170 302 178 315 180 335 177 355 150 385 120 394 88 388M205 210 225 205 250 188M248 188 258 204 278 212M258 204 240 225 214 242 226 264 238 278 275 276 278 264M252 279 215 290 190 306 180 320M180 332 222 336 262 343 257 325 250 300 252 280M252 279 254 306 266 322 270 336 262 343 250 350 266 368 268 390 250 404M177 355 210 364 240 370 266 366M262 343 285 338 310 332M252 186 258 166 275 150 298 128M298 128 292 150 298 165 295 182 286 200 280 212 288 236 276 262M295 145 312 162 340 175 334 183 320 176 322 165M295 184 320 178 345 172 358 178 380 190 430 190M340 160 358 166 375 176 380 190M286 200 310 208 330 194 358 190M280 212 300 207 330 209 350 222 354 245M354 250 372 222 390 236 404 252 395 268 383 260 368 262 355 288 333 296 320 285 298 285 275 276M330 209 340 195 358 190M286 238 315 246 350 250 356 266 355 288M275 278 278 300 300 315 312 328 330 335 340 360 328 378 335 402M300 315 316 318 308 326M355 288 390 285 400 266 404 236 418 238M345 355 342 330 350 308 385 300 405 285 412 330 445 336M345 358 375 344 410 342 445 336 440 370 424 398M395 345 396 380 404 402M328 380 336 404 395 404M434 178 430 205 418 236 420 262 416 282 480 288 520 278 528 264M418 236 450 240 490 233 520 224 550 222 556 240 553 268M420 248 460 248 500 254 528 250 535 266 553 272M520 160 518 180 545 188 548 204 542 222M472 182 470 196 492 200 498 235M548 204 580 195 615 175M545 222 570 230 600 223M410 284 411 308 418 335M445 350 470 344 486 320 510 305 550 310 574 296 553 278 530 275 500 290 490 302M445 362 475 352 500 352 510 325 548 308M480 362 510 366 528 370 532 340 552 332 550 308M440 370 470 372 490 390 520 404 540 385 560 375 580 380M466 404 496 400 530 406 535 434M528 406 560 380M553 425 575 405 600 390M552 332 575 345 590 344M564 232 560 255 566 275M590 230 600 245 596 300 585 330 590 344M440 368 460 358 478 362 500 340 498 322M368 262 388 255 400 240";
const eastLines =
  "M0 94 12 118 30 132 28 152 48 164 65 172 60 190 40 178 18 188 0 192M36 102 32 125 50 135 65 160M65 172 68 180 78 205M65 162 90 158 110 140 128 125M90 97 105 110 128 125 148 128 152 145 130 168 120 200 78 205M88 68 88 85 94 98M145 68 150 82 160 92 162 112 148 125 135 122M162 115 188 118 215 112 243 92 268 96M188 118 188 160 174 185M215 112 210 138 208 160 216 178M243 92 246 75 236 72M268 96 262 110 270 122 260 125 264 140 250 155 248 160M174 185 215 180 248 160 270 168 300 180 340 165M336 150 346 165 374 200 376 222 410 262 412 240 405 225 400 190 396 150M433 165 418 190 414 220 408 240 412 264 428 282 445 290 478 292 498 302M350 182 300 188 260 196 245 200 210 206 185 202 160 208 130 204 115 200M116 200 122 212 130 200 160 200 174 185M122 212 132 218 152 232 186 246 182 260 186 280 168 290 110 285M250 204 300 200 362 190M250 200 246 228 230 226 190 212 172 215 185 225 184 240M186 240 230 238 254 232 296 214 340 222 372 230M78 205 72 225 74 240 68 254 90 255 130 252 186 260M68 254 80 275 108 286 150 290 180 282 220 262 245 256M238 240 255 250 290 250 330 240 374 230M380 240 322 275 318 298M110 288 160 295 200 288 240 270 290 262 330 245M155 298 190 296 225 294 230 306 260 300 290 270 320 250M290 310 300 296 318 298M262 300 300 310 330 305 350 294 380 290 424 275M322 296 345 288 385 280 412 266M428 282 400 318 380 336 362 336 345 320 318 298M445 290 450 316 440 348 438 380 430 396M458 290 470 262 490 240 514 236M300 310 280 325 255 345 255 362 290 360 350 362 348 385 332 395 328 426M300 310 320 330 336 360M230 330 235 316 270 312 290 310M255 362 220 374 180 386 185 376 215 362 250 342 290 316M200 355 235 340 225 330M172 375 160 362 158 345 140 350 110 355 85 350 78 360M155 298 158 320 160 345M155 298 170 318 190 335 185 345 200 355 180 382M118 290 110 310 108 340 85 345 70 325 80 305 78 285 68 254M68 254 50 270 45 290 40 310 30 335M68 254 40 245 28 225 0 230M0 240 26 248 35 290 28 315M40 182 40 205 28 225M80 392 110 376 160 372 178 386M82 380 120 360 158 350M302 362 290 380 294 405 288 432M304 362 300 395 302 440M355 330 375 340 372 370 385 384 384 412M370 336 400 345 398 360 408 370 405 390 437 388M372 230 390 240 412 268";

const MapView = () => (
  <Svg width="383" height="516" viewBox="0 0 383 516">
    <g transform="translate(0 179) scale(.33333)" stroke="#111" strokeWidth="2.7" strokeLinejoin="round" fill="none">
      <path d={meander(outline, 2.2)} fill="#87b5dc" fillRule="evenodd" strokeWidth="3" />
      <path d={meander(westLines, 3.2)} />
      <path d="M241 112 247 150 249 192" strokeWidth="5" />
      <g transform="translate(570 0)">
        <path d={meander(eastLines, 3.2)} />
        <path d="M480 408 495 408 497 400 505 394 512 402 540 402 550 415 545 428 530 428 515 418 500 412z" fill="#87b5dc" />
        <path d="M224 57 234 51 235 62 228 65z" fill="#111" />
      </g>
    </g>
  </Svg>
);

const GlobeDish = () => <Ic s={14}><circle cx="8.5" cy="6.5" r="5.2" fill="#3f98bd" /><path d="M6 3 9 4 8 7 11 9 9 11 6 8z" fill="#55a864" /><path d="M0 2 6-1M2 0 4 4" stroke="#333" /><text x="-.5" y="14" fontSize="5.5" fontWeight="700" fill="#111">GDAL</text></Ic>;
const Grass = () => <Ic s={14}><path d="M7 0 13.5 7 7 14 .5 7z" fill="#fff" stroke="#bbb" strokeWidth=".6" /><path d="M7 12C7 7 7 4 6.5 1.5M7 12C5 9 3 6 1.5 5.5M7 12C9 9 11 6 12.5 5.5M7 12 4 3.5M7 12 10 3.5" stroke="#6fb56a" strokeWidth="1.1" /></Ic>;
const Models = () => <Ic s={16}><path d="M3 9 12 3M4 9 12 12" stroke="#222" strokeWidth="2.2" /><circle cx="4" cy="9" r="3.4" fill="#333" /><circle cx="8" cy="7" r="2.8" fill="#444" /><circle cx="3.2" cy="7.8" r="1" fill="#ccc" /><circle cx="12" cy="3.3" r="3" fill="#2758c5" /><circle cx="11.5" cy="2.5" r=".8" fill="#bcd" /><circle cx="12.3" cy="12.2" r="3.3" fill="#dd1c24" /><circle cx="11.6" cy="11.3" r=".9" fill="#fbb" /></Ic>;
const RLogo = () => <Ic s={16}><ellipse cx="7" cy="6.5" rx="6.2" ry="4.5" stroke="#aaa" strokeWidth="2.2" /><text x="5.5" y="14" fontSize="12.5" fontWeight="700" fill="#1f65b8">R</text></Ic>;
const SplitIc = () => <Ic s={16}><path d="M1 3 5.5 12 9 3 14.5 1.5" stroke="#7894a3" strokeWidth="1.1" /><path d="M8 4 14 12M13 4 7 11M6 8H15" stroke="#f3e45c" strokeDasharray="1.5 1" /></Ic>;
const Inter = () => <Ic s={16}><circle cx="10" cy="6" r="5.2" stroke="#a9bccb" /><path d="M5 5.5H10.5V11C7 11 5 8 5 5.5z" fill="#6288a2" /><rect x=".5" y="5.5" width="10" height="9.5" stroke="#5d7f9a" strokeDasharray="2 .6" /></Ic>;
const Valid = () => <Ic s={16}><path d="M1 15 5 3.5H14" stroke="#777" /><circle cx="5" cy="3.5" r="1.7" fill="#58906a" /><rect x="7.5" y="8.5" width="7" height="6.5" rx="1" fill="#45647e" /><path d="M9 11.5 10.5 13 13 9.5" stroke="#fff" /></Ic>;

type Row = { h?: number; i: number; a?: "o" | "c"; ic?: React.ReactNode; t: string; ls?: number; sel?: boolean };
const rows: Row[] = [
  { h: 16, i: 8, a: "o", t: "Recently used algorithms", ls: -0.22 },
  { h: 18, i: 43, ic: <Terminal />, t: "Split vector layer by attribute", ls: -0.1 },
  { i: 43, ic: <QLeaf />, t: "Bar plot" },
  { i: 43, ic: <QLeaf />, t: "Polar plot", ls: -0.1 },
  { i: 43, ic: <SplitIc />, t: "Split vector layer", ls: -0.1 },
  { i: 43, ic: <Inter />, t: "Intersection" },
  { i: 43, ic: <Valid />, t: "Check validity" },
  { i: 8, a: "c", ic: <GlobeDish />, t: "GDAL/OGR [48 geoalgorithms]", ls: -0.22 },
  { i: 8, a: "c", ic: <Grass />, t: "GRASS GIS 7 commands [314 geoalgorithms]", ls: -0.34 },
  { i: 8, a: "c", ic: <Models />, t: "Models [0 geoalgorithms]", ls: -0.25 },
  { i: 8, a: "c", ic: <QLeaf />, t: "QGIS geoalgorithms [116 geoalgorithms]", ls: -0.3 },
  { h: 16, i: 8, a: "c", ic: <RLogo />, t: "R scripts [5 geoalgorithms]", ls: -0.25 },
  { h: 17, i: 8, a: "o", ic: <Terminal />, t: "Scripts [1 geoalgorithms]", ls: -0.25 },
  { h: 17, i: 28, a: "c", t: "Tools", ls: -0.1 },
  { h: 16, i: 28, a: "o", t: "Vector", ls: -0.1 },
  { i: 63, ic: <Terminal b />, t: "Split vector layer by attribute", ls: -0.1, sel: true },
];

const ToolboxPanel = () => (
  <Toolbox>
    <DockTitle $h={26}><span>Processing Toolbox</span><DockButtons /></DockTitle>
    <Search>Search...</Search>
    <ToolTree>
      {rows.map((r, k) => (
        <TreeRow key={k} $indent={r.i} $h={r.h} $selected={r.sel}>
          {r.a && <Arrow open={r.a === "o"} />}
          {r.a && r.ic && <Label $ml={7} />}
          {r.ic}
          <Label $ml={r.a && !r.ic ? 7 : 6} $ls={r.ls}>{r.t}</Label>
        </TreeRow>
      ))}
    </ToolTree>
    <Notice>
      <NoticeLine>You can add more algorithms to the toolbox, <NoticeLink $line>enable additional</NoticeLink></NoticeLine>
      <NoticeLine><NoticeLink>{"providers.   [close]"}</NoticeLink></NoticeLine>
    </Notice>
  </Toolbox>
);

const StatusBar = () => (
  <Status>
    <Clip $w={46}>Coordinate</Clip>
    <Field $w={240} $ml={4} $center><span>90140,295935</span></Field>
    <Item $ml={4} $w={16}><Ic s={16}><path d="M2 3 8 1 13 6 9 12 3 9z" fill="#333" /><path d="M4 4 9 8M7 2 5 9M3 7 8 3" stroke="#ddd" strokeWidth=".9" /><path d="M12 3 15 1M1 12 4 14" stroke="#888" /><circle cx="10" cy="11" r="4" fill="#eee" stroke="#333" strokeWidth="1.4" /><circle cx="10" cy="11" r="1.3" fill="#333" /></Ic></Item>
    <Item $ml={13} $w={31}>Scale</Item>
    <Field $w={105} $ml={4}><span>1:2.147.268</span><FieldButton $w={25}><Down /></FieldButton></Field>
    <Item $ml={6} $w={13}><Svg width="13" height="16"><path d="M3 8V4.5A3.5 3.5 0 0 1 10 4.5V8" fill="none" stroke="#777" strokeWidth="1.8" /><rect x=".5" y="7.5" width="12" height="8" rx="1" fill="#555" /></Svg></Item>
    <Clip $w={34} $ml={12}>Magnifier</Clip>
    <Field $w={85} $ml={5}><span>100%</span><FieldButton $w={16}><UpTri /><DownTri /></FieldButton></Field>
    <Clip $w={31} $ml={9}>Rotation</Clip>
    <Field $w={85} $ml={10}><span>0,0</span><FieldButton $w={16}><UpTri /><DownTri /></FieldButton></Field>
    <Item $ml={10} $w={16}><Check /></Item>
    <Item $ml={6} $w={44}>Render</Item>
    <Item $ml={16} $w={16}><Ic s={16}><circle cx="8" cy="8" r="6.3" fill="#ddd" stroke="#222" strokeWidth="2" /><path d="M8 .5V15.5M.5 8H15.5" stroke="#333" strokeWidth="1.2" /><path d="M8 3.5 12.5 8 8 12.5 3.5 8z" stroke="#222" strokeWidth="1.3" fill="#eee" /></Ic></Item>
    <Item $ml={4} $w={107} $ls={-0.1}>EPSG:31370 (OTF)</Item>
    <Item $ml={19} $w={16}><Svg width="16" height="15"><path d="M4.5.5H11.5C14 .5 15.5 2.5 15.5 6 15.5 9 14 11 12.5 11.3L14 14.5 9 11.5H4.5C2 11.5.5 9.5.5 6 .5 2.5 2 .5 4.5.5z" fill="#555" /><path d="M3.5 6H5.3M7.1 6H8.9M10.7 6H12.5" stroke="#eee" strokeWidth="1.8" /></Svg></Item>
    <Item $ml={22} $w={11}><Ic s={11}><path d="M9.5 1V11M7 4V11M4.5 7V11M2 9.5V11" stroke="#bbb" strokeDasharray="1 1.7" transform="translate(0 4)" /></Ic></Item>
  </Status>
);

export default function App() {
  return (
    <>
      <Global />
      <Window>
        <TitleBar><WinButton k="x" /><WinButton k="-" /><WinButton k="o" /><TitleText>QGIS 2.18.7</TitleText></TitleBar>
        <FileBar />
        <EditBar />
        <RingBar />
        <Main>
          <SideBar />
          <DockArea />
          <Canvas><MapView /></Canvas>
          <Splitter><Grip $w={4} /></Splitter>
          <ToolboxPanel />
        </Main>
        <StatusBar />
      </Window>
    </>
  );
}
